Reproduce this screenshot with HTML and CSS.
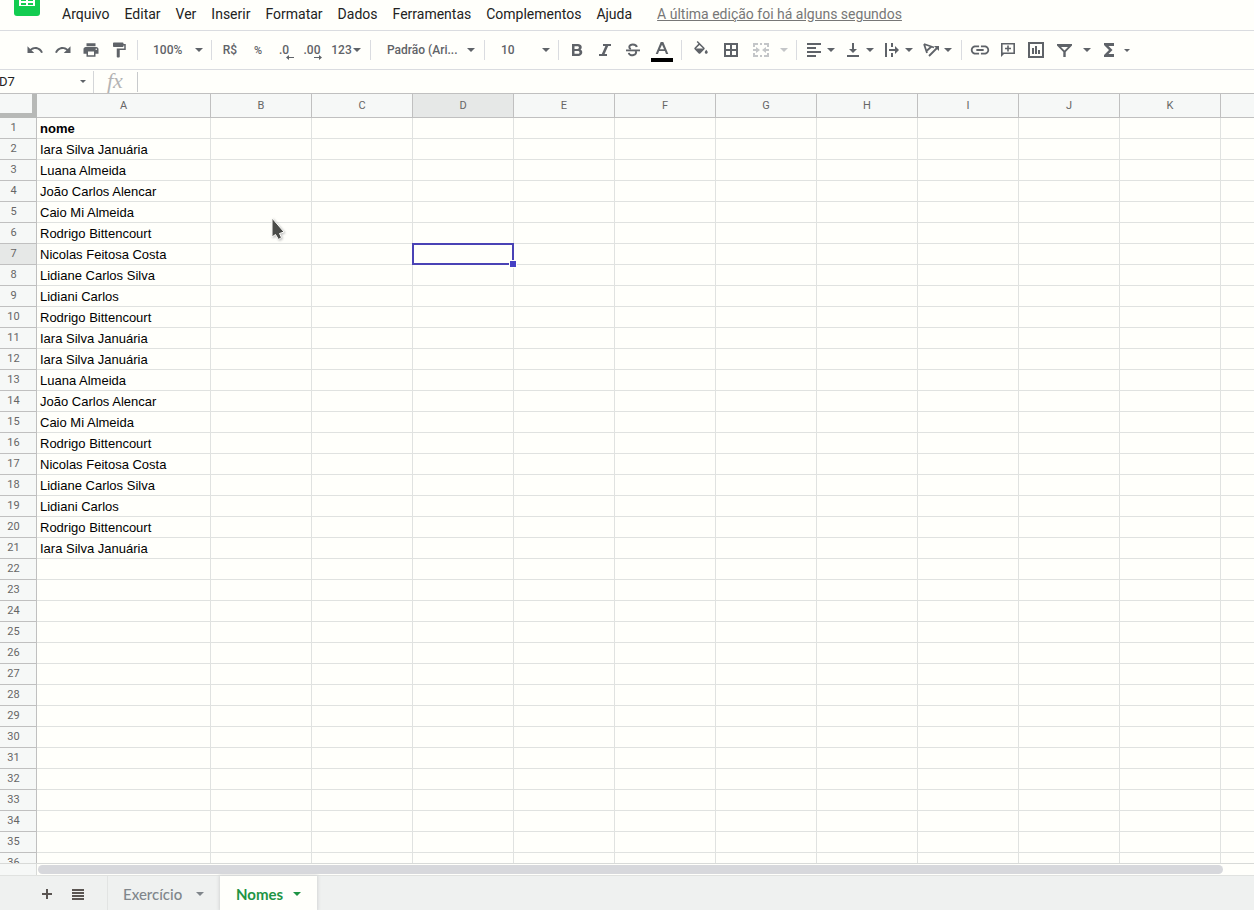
FILE: index.html
```html
<!DOCTYPE html>
<html lang="pt-BR">
<head>
<meta charset="utf-8">
<title>Nomes - Planilha</title>
<link rel="stylesheet" href="styles.css">
</head>
<body>
<svg class="defs" aria-hidden="true"><symbol id="caret" viewBox="0 0 8 4"><path d="M0 0h8L4 4z"/></symbol></svg>

<header class="menubar">
  <svg class="logo" viewBox="0 0 26 16" aria-hidden="true"><path fill="#12cc50" d="M0 0h26v13q0 3-3 3H3q-3 0-3-3z"/><path fill="#fff" d="M5 0h16v6H5z"/><path fill="#12cc50" d="M7 0h5v1H7zm7 0h5v1h-5zM7 3h5v2H7zm7 0h5v2h-5z"/></svg>
  <nav class="menus">
    <button>Arquivo</button><button>Editar</button><button>Ver</button><button>Inserir</button><button>Formatar</button><button>Dados</button><button>Ferramentas</button><button>Complementos</button><button>Ajuda</button>
  </nav>
  <a class="last-edit" href="#">A última edição foi há alguns segundos</a>
</header>

<div class="toolbar" role="toolbar" aria-label="Ferramentas">
  <div class="group">
    <button class="tool" aria-label="Desfazer"><svg viewBox="0 0 24 24"><path d="M12.5 8c-2.65 0-5.05.99-6.9 2.6L2 7v9h9l-3.62-3.62c1.39-1.16 3.16-1.88 5.12-1.88 3.54 0 6.55 2.31 7.6 5.5l2.37-.78C21.08 11.03 17.15 8 12.5 8z"/></svg></button>
    <button class="tool" aria-label="Refazer"><svg viewBox="0 0 24 24"><path d="M18.4 10.6C16.55 8.99 14.15 8 11.5 8c-4.65 0-8.58 3.03-9.96 7.22L3.9 16c1.05-3.19 4.05-5.5 7.6-5.5 1.95 0 3.73.72 5.12 1.88L13 16h9V7l-3.6 3.6z"/></svg></button>
    <button class="tool" aria-label="Imprimir"><svg viewBox="0 0 24 24"><path d="M19 8H5c-1.66 0-3 1.34-3 3v6h4v4h12v-4h4v-6c0-1.66-1.34-3-3-3zm-3 11H8v-5h8v5zm3-7c-.55 0-1-.45-1-1s.45-1 1-1 1 .45 1 1-.45 1-1 1zm-1-9H6v4h12V3z"/></svg></button>
    <button class="tool" aria-label="Copiar formatação"><svg viewBox="0 0 24 24"><path d="M18 4V3c0-.55-.45-1-1-1H5c-.55 0-1 .45-1 1v4c0 .55.45 1 1 1h12c.55 0 1-.45 1-1V6h1v4H9v11c0 .55.45 1 1 1h2c.55 0 1-.45 1-1v-9h8V4h-3z"/></svg></button>
  </div>
  <div class="group"><label class="pick pick-zoom"><select aria-label="Zoom"><option>100%</option></select><svg class="caret"><use href="#caret"/></svg></label></div>
  <div class="group">
    <button class="tool">R$</button>
    <button class="tool small">%</button>
    <button class="tool decimal" aria-label="Diminuir casas decimais">.0<svg viewBox="0 0 8 5"><path d="M3 0v2h5v1H3v2L0 2.500z"/></svg></button>
    <button class="tool decimal" aria-label="Aumentar casas decimais">.00<svg viewBox="0 0 8 5"><path d="M5 0v2H0v1h5v2l3-2.500z"/></svg></button>
    <button class="tool formats">123<svg class="caret"><use href="#caret"/></svg></button>
  </div>
  <div class="group"><label class="pick pick-font"><select aria-label="Fonte"><option>Padrão (Ari...</option></select><svg class="caret"><use href="#caret"/></svg></label></div>
  <div class="group"><label class="pick pick-size"><select aria-label="Tamanho da fonte"><option>10</option></select><svg class="caret"><use href="#caret"/></svg></label></div>
  <div class="group">
    <button class="tool" aria-label="Negrito"><svg viewBox="0 0 18 18"><path fill-rule="evenodd" d="M4 3h6c3.800 0 4.900 4 2.500 5.600C15.600 10 14.500 15 10.500 15H4zm2.500 2.200v2.700h3c1.900 0 1.900-2.700 0-2.700zm0 4.700v2.900h3.500c2 0 2-2.900 0-2.900z"/></svg></button>
    <button class="tool" aria-label="Itálico"><svg viewBox="0 0 18 18"><path d="M7 3h8v2h-2.800L8.600 13H11v2H3v-2h2.800L9.400 5H7z"/></svg></button>
    <button class="tool" aria-label="Tachado"><svg viewBox="0 0 18 18"><path d="M2 8.500h14v1.800H2z"/><path fill="none" stroke="#5f6368" stroke-width="2" d="M12.800 6C12.300 2.800 5.300 2.500 5.300 6c0 1 .5 1.700 1.500 2.200M11.500 10c3 3.700-6 6.500-6.700 1.800"/></svg></button>
    <button class="tool ink" aria-label="Cor do texto"><svg viewBox="0 0 22 22"><path fill-rule="evenodd" d="M9.700 2h2.600l5 12H15l-1.100-3H8.100L7 14H4.700zM11 4.700L8.900 9.200h4.200z"/><path fill="#000" d="M0 18h22v4H0z"/></svg></button>
  </div>
  <div class="group wide">
    <button class="tool" aria-label="Cor de preenchimento"><svg viewBox="0 0 24 24"><path d="M16.560 8.940L7.620 0 6.210 1.410l2.380 2.380-5.150 5.150c-.59.59-.59 1.540 0 2.120l5.500 5.500c.29.290.680.440 1.060.440s.770-.15 1.060-.44l5.500-5.500c.590-.58.590-1.530 0-2.120zM5.210 10L10 5.210 14.790 10zM19 11.500s-2 2.170-2 3.500c0 1.100.9 2 2 2s2-.9 2-2c0-1.330-2-3.500-2-3.500z"/></svg></button>
    <button class="tool" aria-label="Bordas"><svg viewBox="0 0 18 18"><path fill-rule="evenodd" d="M2 2h14v14H2zm2 2v4h4V4zm6 0v4h4V4zm-6 6v4h4v-4zm6 0v4h4v-4z"/></svg></button>
    <button class="tool" aria-label="Mesclar células" disabled><svg viewBox="0 0 18 18"><path d="M1 2h5v2H3v2H1zm7 0h2v2H8zm4 0h5v4h-2V4h-3zM1 12h2v2h3v2H1zm7 2h2v2H8zm7-2h2v4h-5v-2h3zM1 8h3V6l4 3-4 3v-2H1zm16 0h-3V6l-4 3 4 3v-2h3z"/></svg></button>
    <button class="drop" aria-label="Opções de mesclagem" disabled><svg class="caret"><use href="#caret"/></svg></button>
  </div>
  <div class="group paired">
    <button class="tool" aria-label="Alinhamento horizontal"><svg viewBox="0 0 18 18"><path d="M2 2h14v2H2zm0 4h9v2H2zm0 4h14v2H2zm0 4h9v2H2z"/></svg><svg class="caret"><use href="#caret"/></svg></button>
    <button class="tool" aria-label="Alinhamento vertical"><svg viewBox="0 0 18 18"><path d="M8 2h2v6h3l-4 4-4-4h3zM3 14h12v2H3z"/></svg><svg class="caret"><use href="#caret"/></svg></button>
    <button class="tool" aria-label="Ajuste de texto"><svg viewBox="0 0 18 18"><path d="M2 2h2v14H2zm6 0h2v4H8zm0 10h2v4H8zM6 8h6V5l4 4-4 4v-3H6z"/></svg><svg class="caret"><use href="#caret"/></svg></button>
    <button class="tool" aria-label="Rotação do texto"><svg viewBox="0 0 18 18"><path fill="none" stroke="#5f6368" stroke-width="1.800" d="M2 3l10 3.500M2 3l3 9M9.500 5.500l-5 4.500M7 15l8-8"/><path d="M17 5v5l-5-5z"/></svg><svg class="caret"><use href="#caret"/></svg></button>
  </div>
  <div class="group">
    <button class="tool" aria-label="Inserir link"><svg class="large" viewBox="0 0 24 24"><path d="M3.900 12c0-1.710 1.390-3.100 3.100-3.100h4V7H7c-2.760 0-5 2.240-5 5s2.240 5 5 5h4v-1.900H7c-1.710 0-3.100-1.390-3.100-3.100zM8 13h8v-2H8v2zm9-6h-4v1.900h4c1.710 0 3.100 1.390 3.100 3.100s-1.390 3.100-3.100 3.100h-4V17h4c2.760 0 5-2.240 5-5s-2.240-5-5-5z"/></svg></button>
    <button class="tool" aria-label="Inserir comentário"><svg viewBox="0 0 18 18"><path fill-rule="evenodd" d="M2 2h14v11H5l-3 3zm1.600 1.600v7.800h10.800V3.600zM8.200 4.500h1.600v2.200h2.200v1.600H9.800v2.200H8.200V8.300H6V6.700h2.200z"/></svg></button>
    <button class="tool" aria-label="Inserir gráfico"><svg viewBox="0 0 18 18"><path fill-rule="evenodd" d="M1 1h16v16H1zm2 2v12h12V3zm2 4h2v6H5zm3-2h2v8H8zm3 4h2v4h-2z"/></svg></button>
    <button class="tool" aria-label="Criar filtro"><svg viewBox="0 0 18 18"><path fill-rule="evenodd" d="M2 3h15v1.500L10.700 11v5H8.300v-5L2 4.500zm4 3l3.500 3.500L13 6z"/></svg></button>
    <button class="drop drop-wide" aria-label="Opções de filtro"><svg class="caret"><use href="#caret"/></svg></button>
    <button class="tool sum" aria-label="Funções"><svg viewBox="0 0 18 18"><path d="M4 2h10v3H8.500l4 4-4 4H14v3H4v-2l5-5-5-5z"/></svg></button>
    <button class="drop drop-small" aria-label="Opções de funções"><svg class="caret"><use href="#caret"/></svg></button>
  </div>
</div>

<div class="formula-bar">
  <label class="name-box"><input value="D7" aria-label="Caixa de nome"><svg class="caret"><use href="#caret"/></svg></label>
  <label class="fx" for="formula">fx</label>
  <input class="formula" id="formula">
</div>

<main class="grid">
  <table class="sheet">
    <colgroup><col class="col-head"><col class="col-first"><col span="10" class="col-std"><col></colgroup>
    <thead><tr id="letters"><th class="corner" aria-label="Selecionar tudo"></th></tr></thead>
    <tbody id="rows"></tbody>
  </table>
  <svg class="pointer" viewBox="0 0 14 22" aria-hidden="true"><path fill="#4a4b48" stroke="#fffffb" d="M1 0v19l3.500-2.500 3 5 3-2-2-4 4.500-1.500z"/></svg>
</main>

<div class="scroll"><div class="scroll-head"></div><div class="track"><div class="thumb"></div></div></div>

<footer class="tabs">
  <button class="tab-tool" aria-label="Adicionar página"><svg viewBox="0 0 12 12"><path d="M5 1h2v4h4v2H7v4H5V7H1V5h4z"/></svg></button>
  <button class="tab-tool" aria-label="Todas as páginas"><svg viewBox="0 0 12 12"><path d="M0 1h12v2H0zm0 3h12v2H0zm0 3h12v2H0zm0 3h12v2H0z"/></svg></button>
  <button class="tab">Exercício<svg class="caret"><use href="#caret"/></svg></button>
  <button class="tab active">Nomes<svg class="caret"><use href="#caret"/></svg></button>
</footer>
<script src="sheet.js"></script>
</body>
</html>
```
FILE: styles.css
```css
* { box-sizing: border-box; }

body {
  margin: 0;
  height: 100vh;
  display: flex;
  flex-direction: column;
  overflow: hidden;
  background: #fffffb;
  color: #222;
  font-family: Roboto, "Liberation Sans", sans-serif;
}

button, input, select {
  margin: 0;
  padding: 0;
  border: 0;
  outline: 0;
  background: none;
  color: inherit;
  font: inherit;
}

svg { display: block; flex: none; fill: currentColor; }
.defs { position: absolute; width: 0; height: 0; }
.caret { width: 8px; height: 4px; }

/* Menu bar */
.menubar {
  display: flex;
  flex: none;
  align-items: center;
  height: 31px;
  padding: 0 14px 2px;
  border-bottom: 1px solid #dadce0;
  font-size: 14px;
  white-space: nowrap;
}
.logo { width: 26px; height: 16px; align-self: flex-start; }
.menus { display: flex; gap: 1px; margin-left: 15px; }
.menus button { padding: 0 7px; }
.last-edit { margin-left: 18px; color: #777; }

/* Toolbar */
.toolbar {
  display: flex;
  flex: none;
  align-items: center;
  height: 39px;
  padding-left: 21px;
  border-bottom: 1px solid #dadce0;
  color: #5f6368;
  font-size: 12px;
  font-weight: 500;
  white-space: nowrap;
}
.group { display: flex; flex: none; align-items: center; height: 20px; }
.group + .group { margin-left: 4px; padding-left: 4px; border-left: 1px solid #dadce0; }
.tool {
  display: flex;
  align-items: center;
  justify-content: center;
  width: 28px;
  height: 28px;
}
.tool svg:not(.caret) { width: 18px; height: 18px; }
.tool svg.large:not(.caret) { width: 22px; height: 22px; }
.tool.small { font-size: 11px; }
.tool.decimal { position: relative; padding-right: 4px; }
.tool.decimal svg:not(.caret) { position: absolute; right: 6px; bottom: 4px; width: 8px; height: 5px; }
.tool.formats { width: 38px; gap: 1px; padding-right: 2px; }
.tool.ink { width: 30px; }
.tool.ink svg:not(.caret) { width: 22px; height: 22px; margin-top: 2px; }
.wide .tool { width: 30px; }
.paired .tool { width: 39px; justify-content: flex-start; padding-left: 4px; gap: 4px; }
.toolbar button:disabled { color: #c4c6c8; }
.drop { display: flex; width: 16px; height: 28px; align-items: center; justify-content: center; }
.drop-wide { width: 18px; }
.drop-small { width: 9px; }
.drop-small .caret { width: 6px; height: 3px; }
.tool.sum { width: 26px; }

.pick { display: flex; align-items: center; height: 20px; padding: 0 4px 0 11px; }
.pick select { flex: 1; min-width: 0; appearance: none; }
.pick-zoom { width: 65px; }
.pick-font { width: 105px; padding-left: 12px; padding-right: 5px; }
.pick-size { width: 65px; padding-left: 12px; }

/* Formula bar */
.formula-bar { display: flex; flex: none; align-items: center; height: 24px; border-bottom: 1px solid #c0c0c0; }
.name-box {
  display: flex;
  align-items: center;
  width: 94px;
  height: 22px;
  padding-right: 7px;
  border-right: 1px solid #d4d6d8;
  color: #5f6368;
  font-size: 13px;
}
.name-box input { flex: 1; min-width: 0; color: #222; text-indent: -1px; }
.name-box .caret { width: 6px; height: 3px; }
.fx {
  width: 44px;
  padding: 0 0 2px 13px;
  border-right: 1px solid #c8cacc;
  color: #b4b4b4;
  font: italic 22px/18px "Liberation Serif", serif;
}
.formula { flex: 1; height: 20px; padding-left: 6px; font-size: 13px; }

/* Grid */
.grid { position: relative; flex: 1; min-height: 0; overflow: hidden; }
.sheet { width: 100%; min-width: 1254px; table-layout: fixed; border-collapse: separate; border-spacing: 0; }
.col-head { width: 37px; }
.col-first { width: 174px; }
.col-std { width: 101px; }
.sheet th {
  padding: 0;
  border-right: 1px solid #c0c0c0;
  border-bottom: 1px solid #c0c0c0;
  background: #f6f8f7;
  color: #666;
  font-size: 11px;
  font-weight: 400;
}
.sheet thead th { height: 24px; }
.sheet thead .corner { border-right: 5px solid #b7b9b7; border-bottom: 5px solid #b7b9b7; }
.sheet tbody th { height: 21px; padding: 0 9px 1px 0; line-height: 19px; }
.sheet .current { background: #e6e8e7; }
.sheet td {
  padding: 1px 3px 0;
  border-right: 1px solid #e0e2e0;
  border-bottom: 1px solid #e0e2e0;
  color: #000;
  font: 13px/19px "Liberation Sans", Arial, sans-serif;
  white-space: nowrap;
}
.sheet th:last-child, .sheet td:last-child { border-right: 0; }
.sheet .title { font-weight: 700; }
.sheet .selected { position: relative; }
.outline { position: absolute; inset: -1px; border: 2px solid #4a43b5; }
.handle {
  position: absolute;
  right: -4px;
  bottom: -4px;
  width: 8px;
  height: 8px;
  border: 1px solid #fffffb;
  background: #4540c4;
}
.pointer {
  position: absolute;
  left: 271px;
  top: 124px;
  width: 14px;
  height: 22px;
  filter: drop-shadow(1px 1px 1px #bbb);
}

/* Horizontal scroll bar */
.scroll { display: flex; flex: none; height: 12px; border-top: 1px solid #d8dad8; }
.scroll-head { width: 37px; border-right: 1px solid #d8dad8; background: #f6f8f7; }
.track { flex: 1; padding: 1px 31px 1px 1px; }
.thumb { height: 9px; border-radius: 5px; background: #d7d8dc; }

/* Sheet tabs */
.tabs {
  display: flex;
  flex: none;
  height: 35px;
  padding-left: 31px;
  border-top: 1px solid #e0e2e0;
  background: #eff1f0;
  color: #5a5552;
}
.tab-tool { display: flex; width: 31px; align-items: center; justify-content: center; padding-top: 2px; }
.tab-tool svg { width: 12px; height: 12px; }
.tab {
  display: flex;
  align-items: center;
  justify-content: space-between;
  gap: 8px;
  min-width: 113px;
  padding: 2px 16px 0 15px;
  color: #80868b;
  font: 500 15px/20px Lato, sans-serif;
}
.tab-tool + .tab { margin-left: 14px; border-left: 1px solid #e2e4e3; }
.tab.active { min-width: 97px; padding-left: 16px; background: #fffffb; color: #1e9444; font-weight: 700; box-shadow: 0 0 3px 1px #d4d6d5; }
```
FILE: sheet.js
```js
const names = [
  "Iara Silva Januária", "Luana Almeida", "João Carlos Alencar", "Caio Mi Almeida",
  "Rodrigo Bittencourt", "Nicolas Feitosa Costa", "Lidiane Carlos Silva", "Lidiani Carlos",
  "Rodrigo Bittencourt", "Iara Silva Januária"
];
// The list repeats after its first ten entries.
const column = ["nome", ...names, ...names];
const letters = "ABCDEFGHIJK".split("");
const selected = { row: 7, col: "D" };

const head = document.getElementById("letters");
for (const letter of [...letters, ""]) {
  const th = document.createElement("th");
  th.textContent = letter;
  if (letter === selected.col) th.className = "current";
  head.append(th);
}

const body = document.getElementById("rows");
for (let row = 1; row <= 36; row++) {
  const tr = body.insertRow();
  const th = document.createElement("th");
  th.textContent = row;
  if (row === selected.row) th.className = "current";
  tr.append(th);
  for (const letter of [...letters, ""]) {
    const td = tr.insertCell();
    if (letter === "A") {
      td.textContent = column[row - 1] || "";
      if (row === 1) td.className = "title";
    }
    if (row === selected.row && letter === selected.col) {
      td.className = "selected";
      td.innerHTML = '<div class="outline"></div><div class="handle"></div>';
    }
  }
}
```
